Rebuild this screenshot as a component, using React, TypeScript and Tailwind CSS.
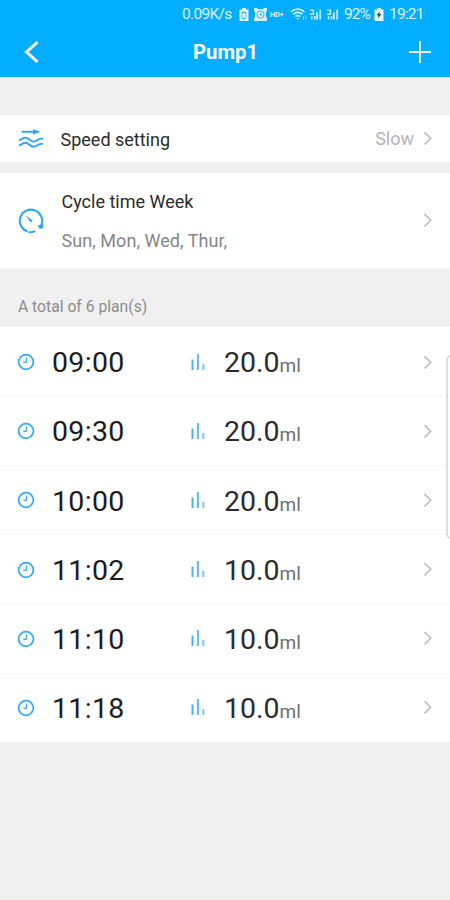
import type { ReactNode } from 'react'

type Plan = { time: string; amount: string }

const PLANS: Plan[] = [
  { time: '09:00', amount: '20.0' },
  { time: '09:30', amount: '20.0' },
  { time: '10:00', amount: '20.0' },
  { time: '11:02', amount: '10.0' },
  { time: '11:10', amount: '10.0' },
  { time: '11:18', amount: '10.0' },
]

function Chevron() {
  return (
    <svg className="w-[9px] h-[15px] shrink-0" viewBox="0 0 9 15" fill="none" stroke="#bdbdbd" strokeWidth="1.6">
      <path d="M.5 1l6.200 6.200L.5 13.500" />
    </svg>
  )
}

function FlowIcon() {
  return (
    <svg className="w-[26px] h-[20px] shrink-0" viewBox="0 0 26 20" fill="none" stroke="#2ba4f5" strokeWidth="1.9">
      <path d="M3.500 2.800H17" />
      <path d="M15 .2l7.500 2.600-7.500 2.600z" fill="#2ba4f5" stroke="none" />
      <path d="M1 11C4 11 4.500 8.600 7.500 8.600c3.500 0 4.500 4 8 4 3.300 0 4-3.200 9.500-3.200" />
      <path d="M1 16.200c3 0 3.500-2.400 6.500-2.400 3.500 0 4.500 4 8 4 3.300 0 4-3.200 9.500-3.200" />
    </svg>
  )
}

function CycleIcon() {
  return (
    <svg className="w-[26px] h-[26px] shrink-0" viewBox="0 0 26 26" fill="none" stroke="#2ba4f5" strokeWidth="2">
      <path d="M9.500 23.500A11.200 11.200 0 1 1 23.400 17" />
      <path d="M10.500 24a11.200 11.200 0 0 0 6.700-.8" />
      <path d="M19.800 17.500l5.500-1.600-.6 4.600-3 .2z" fill="#2ba4f5" stroke="none" />
      <path d="M7.300 7.500l7.300 5-1.900 1.900z" fill="#2ba4f5" stroke="none" />
    </svg>
  )
}

function ClockIcon() {
  return (
    <svg className="w-[18px] h-[18px] shrink-0" viewBox="0 0 18 18" fill="none" stroke="#3aa9f2">
      <circle cx="9" cy="9" r="7.400" strokeWidth="1.800" />
      <path d="M9.700 4.500L9.200 9.300H6.300" strokeWidth="1.300" />
    </svg>
  )
}

function BarsIcon() {
  return (
    <svg className="w-[14px] h-[17px] shrink-0" viewBox="0 0 14 17">
      <rect x="0.500" y="5.500" width="2" height="10.500" fill="#45b0f2" />
      <rect x="5.900" y="0" width="2" height="16" fill="#5cb8f5" />
      <rect x="11.300" y="10" width="2" height="6" fill="#84c0f7" />
    </svg>
  )
}

function SignalIcon() {
  return (
    <svg className="w-[13px] h-[13px] shrink-0" viewBox="0 0 14 13" fill="#fff">
      <path d="M1 1h4.500v1.500H1zM4 2.500h1.500v3H4zM1 5.500h4.500V7H1zM2 8.500h1.800V12H2zM5.200 8H7v4H5.200z" opacity=".8" />
      <path d="M7.500 4H9.700v8H7.500zM11 1h2v11h-2z" opacity=".7" />
    </svg>
  )
}

function StatusBar() {
  return (
    <div className="h-[29px] flex items-center pl-[182px] text-white/85 text-[15.500px]">
      <span className="w-[50px] whitespace-nowrap tracking-[-0.700px]">0.09K/s</span>
      <svg className="ml-[7px] w-[10px] h-[13px]" viewBox="0 0 10 13">
        <path d="M3 0h4v1.500h2.500V13H.5V1.500H3z" fill="#e4f6ff" />
        <path d="M3 6a2 2 0 0 1 4 0M2.300 8h1.700M6 8h1.700M3 10.300h4" fill="none" stroke="#009fe8" strokeWidth="1.100" />
      </svg>
      <svg className="ml-[5px] w-[13px] h-[13px]" viewBox="0 0 13 13">
        <path d="M0 0h3l1 1h5l1-1h3v3l-1 1v5l1 1v3H0v-3l1-1V4L0 3z" fill="#d8f1ff" />
        <circle cx="6.500" cy="6.500" r="3.600" fill="none" stroke="#38b6f7" />
        <path d="M6.500 4.500v2.400h2" fill="none" stroke="#38b6f7" />
      </svg>
      <span className="ml-[3px] w-[16px] text-[7.500px] font-bold text-white/80 tracking-[-0.3px]">HD+</span>
      <svg className="ml-[4px] w-[18px] h-[13px]" viewBox="0 0 18 13" fill="none" stroke="#d8f1ff" strokeWidth="1.700">
        <path d="M1 3.800C5 .3 10.500.3 14.500 3.800M3.200 6.200c2.700-2.300 6.400-2.300 9.100 0M5.300 8.600c1.500-1.200 3.500-1.200 5 0" />
        <path d="M6.300 10l1.500 1.800L9.300 10z" fill="#c9ecff" stroke="none" />
        <path d="M13.500 8v4M16 7.500v4" strokeWidth="1" opacity=".6" />
      </svg>
      <div className="ml-px flex gap-[4px]">
        <SignalIcon />
        <SignalIcon />
      </div>
      <span className="ml-[5px] w-[26px] whitespace-nowrap tracking-[-0.900px]">92%</span>
      <svg className="ml-[4px] w-[10px] h-[13px]" viewBox="0 0 10 13">
        <path d="M3 0h4v1.500h2.500V13H.5V1.500H3z" fill="#e4f6ff" />
        <path d="M5.800 3.500L2.500 7.300h2L4 10.300l3.500-4h-2z" fill="#24404f" />
      </svg>
      <span className="ml-[5px] whitespace-nowrap tracking-[-0.800px]">19:21</span>
    </div>
  )
}

function SettingRow({ icon, children, value, className }: {
  icon: ReactNode
  children: ReactNode
  value?: string
  className: string
}) {
  return (
    <div className={`bg-white flex items-center pl-[18px] pr-[17px] ${className}`}>
      {icon}
      <div className="flex-1">{children}</div>
      {value && <span className="mr-[10px] pt-px text-lg text-[#b5b5b5]">{value}</span>}
      <Chevron />
    </div>
  )
}

export default function App() {
  return (
    <div className="relative w-[450px] h-[900px] overflow-hidden bg-[#f0f0f0] font-[Roboto,sans-serif]">
      {/* Header */}
      <header className="h-[77px] bg-[#00adff]">
        <StatusBar />
        <div className="h-[46px] flex items-center justify-between pl-6 pr-[18px]">
          <svg className="w-[15px] h-[22px]" viewBox="0 0 15 22" fill="none" stroke="#fff" strokeWidth="3">
            <path d="M13.500 1.200L2.500 11l11 9.800" />
          </svg>
          <h1 className="ml-[4px] pt-px text-white text-[20.300px] font-bold">Pump1</h1>
          <svg className="w-6 h-6" viewBox="0 0 24 24" stroke="#e6f7ff" strokeWidth="2">
            <path d="M12 1v22M1 12h22" />
          </svg>
        </div>
      </header>

      {/* Settings */}
      <SettingRow className="mt-[38px] h-[47px]" icon={<FlowIcon />} value="Slow">
        <p className="pl-[16.500px] pt-[2px] text-lg text-[#2b2b2b]">Speed setting</p>
      </SettingRow>
      <SettingRow className="mt-[11px] h-[95px]" icon={<CycleIcon />}>
        <div className="pl-[17.500px] pt-[2px] flex flex-col gap-[11px]">
          <p className="text-lg text-[#2b2b2b]">Cycle time Week</p>
          <p className="text-lg text-[#868686] tracking-[0.050px]">Sun, Mon, Wed, Thur,</p>
        </div>
      </SettingRow>

      {/* Plans */}
      <p className="h-[59px] pt-[27px] pl-[18px] text-[15.700px] leading-6 text-[#8c8c8c]">A total of {PLANS.length} plan(s)</p>
      <ul className="h-[415px] grid grid-rows-6 bg-white">
        {PLANS.map((plan) => (
          <li
            key={plan.time}
            className="flex items-center pl-[17px] pr-[17px] border-t border-[#f3f3f3] first:border-transparent"
          >
            <ClockIcon />
            <span className="ml-[17px] w-[139px] pt-[3px] text-[28.500px] tracking-[0.350px] text-[#1c1c1c]">{plan.time}</span>
            <BarsIcon />
            <span className="ml-[19px] flex-1 pt-[3px] text-[28.500px] text-[#2c2c2c]">
              {plan.amount}
              <span className="text-[19px] text-[#6e6e6e]">ml</span>
            </span>
            <Chevron />
          </li>
        ))}
      </ul>

      {/* Edge panel handle */}
      <div className="absolute left-[446px] top-[355px] w-4 h-[184px] rounded-[5px] border-2 border-[#dedede] bg-white" />
    </div>
  )
}
